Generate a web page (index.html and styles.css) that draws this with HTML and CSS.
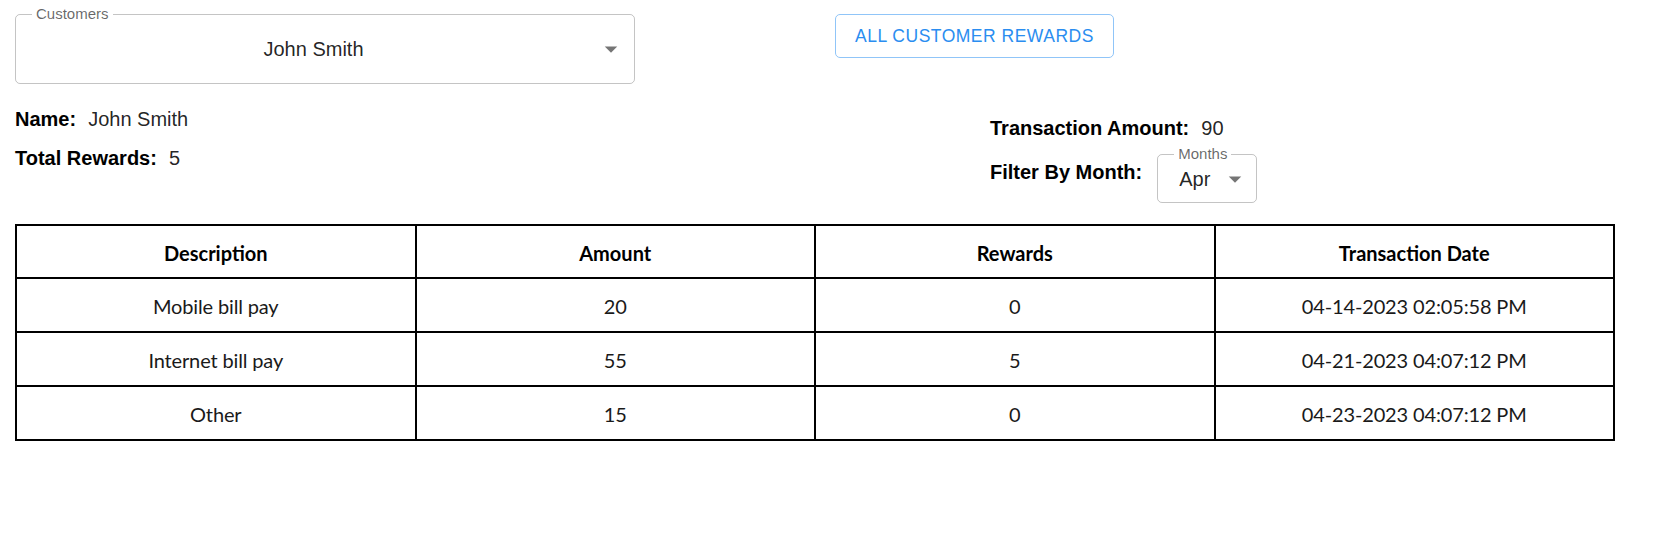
FILE: index.html
```html
<!DOCTYPE html>
<html lang="en">
<head>
<meta charset="utf-8">
<title>Customer Rewards</title>
<link rel="stylesheet" href="styles.css">
</head>
<body>
<div class="app">
  <div class="top-row">
    <div class="outlined customers">
      <span class="float-label">Customers</span>
      <div class="select-value">John Smith</div>
      <svg class="arrow" viewBox="0 0 24 24" aria-hidden="true"><path d="M7 10l5 5 5-5z"/></svg>
    </div>
    <button class="btn-outlined" type="button">ALL CUSTOMER REWARDS</button>
  </div>

  <div class="info">
    <div class="info-left">
      <div class="info-row"><span class="lbl">Name:</span><span class="val">John Smith</span></div>
      <div class="info-row"><span class="lbl">Total Rewards:</span><span class="val">5</span></div>
    </div>
    <div class="info-right">
      <div class="info-row amount-row"><span class="lbl">Transaction Amount:</span><span class="val">90</span></div>
      <div class="filter-row">
        <span class="lbl filter-lbl">Filter By Month:</span>
        <div class="outlined months">
          <span class="float-label">Months</span>
          <div class="select-value months-value">Apr</div>
          <svg class="arrow" viewBox="0 0 24 24" aria-hidden="true"><path d="M7 10l5 5 5-5z"/></svg>
        </div>
      </div>
    </div>
  </div>

  <table class="tx-table">
    <thead>
      <tr><th>Description</th><th>Amount</th><th>Rewards</th><th>Transaction Date</th></tr>
    </thead>
    <tbody>
      <tr><td>Mobile bill pay</td><td>20</td><td>0</td><td>04-14-2023 02:05:58 PM</td></tr>
      <tr><td>Internet bill pay</td><td>55</td><td>5</td><td>04-21-2023 04:07:12 PM</td></tr>
      <tr><td>Other</td><td>15</td><td>0</td><td>04-23-2023 04:07:12 PM</td></tr>
    </tbody>
  </table>
</div>
</body>
</html>
```

FILE: styles.css
```css
html, body {
  margin: 0;
  padding: 0;
  background: #fff;
}

body {
  font-family: "Liberation Sans", Arial, sans-serif;
  color: rgba(0, 0, 0, 0.87);
}

.app {
  padding: 14px 42px 0 15px;
}

.top-row {
  display: flex;
  align-items: flex-start;
  gap: 200px;
}

.outlined {
  position: relative;
  box-sizing: border-box;
  border: 1px solid rgba(0, 0, 0, 0.23);
  border-radius: 5px;
  display: flex;
  align-items: center;
}

.customers {
  width: 620px;
  height: 70px;
  padding: 0 40px 0 17px;
  justify-content: center;
}

.float-label {
  position: absolute;
  top: -10px;
  left: 16px;
  padding: 0 4px;
  background: #fff;
  font-family: "Liberation Sans", Arial, sans-serif;
  font-size: 15px;
  line-height: 18px;
  color: rgba(0, 0, 0, 0.6);
}

.select-value {
  font-family: "Liberation Sans", Arial, sans-serif;
  font-size: 20px;
  line-height: 28px;
  color: rgba(0, 0, 0, 0.87);
}

.arrow {
  position: absolute;
  right: 8px;
  top: calc(50% - 15px);
  width: 30px;
  height: 30px;
  fill: rgba(0, 0, 0, 0.54);
}

.btn-outlined {
  box-sizing: border-box;
  height: 44px;
  padding: 0 19px;
  border: 1px solid #90c5f8;
  border-radius: 5px;
  background: #fff;
  color: #2a8df0;
  font-family: "Liberation Sans", Arial, sans-serif;
  font-size: 17.5px;
  letter-spacing: 0.5px;
  line-height: 20px;
}

.info {
  display: flex;
  margin-top: 23px;
}

.info-left {
  width: 975px;
  display: flex;
  flex-direction: column;
  gap: 15px;
}

.info-row {
  display: flex;
  gap: 12px;
  font-family: "Liberation Sans", Arial, sans-serif;
  font-size: 20px;
  line-height: 24px;
}

.lbl {
  font-family: "Liberation Sans", Arial, sans-serif;
  font-weight: bold;
  color: #000;
}

.val {
  color: rgba(0, 0, 0, 0.87);
}

.info-right {
  display: flex;
  flex-direction: column;
}

.amount-row {
  margin-top: 9px;
}

.filter-row {
  display: flex;
  align-items: flex-start;
  gap: 12px;
  margin-top: 14px;
}

.filter-lbl {
  font-size: 20px;
  line-height: 24px;
  margin-top: 6px;
}

.months {
  width: 100px;
  height: 49px;
  padding: 0 40px 0 21px;
  margin-left: 3px;
}

.months .float-label {
  left: 16px;
}

.months .arrow {
  right: 6px;
}

.tx-table {
  margin-top: 21px;
  width: 1600px;
  border-collapse: collapse;
  table-layout: fixed;
  border: 2px solid #000;
  font-family: Lato, "Open Sans", sans-serif;
  font-size: 20px;
  color: #000;
}

.tx-table th,
.tx-table td {
  border: 2px solid #000;
  text-align: center;
  padding: 2px 0 0;
  line-height: 24px;
}

.tx-table thead tr {
  height: 53px;
}

.tx-table tbody tr {
  height: 54px;
}

.tx-table th {
  font-weight: bold;
}

.tx-table td {
  font-weight: normal;
  color: #1a1a1a;
  letter-spacing: -0.15px;
}
```
